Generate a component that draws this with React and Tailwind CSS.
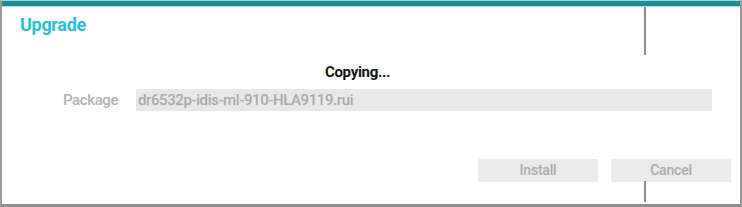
import React from "react";

export default function App() {
  return (
    <div className="relative w-[742px] h-[207px] bg-white overflow-hidden" style={{ fontFamily: "Roboto, 'Liberation Sans', sans-serif" }}>
      <div className="absolute inset-0 border-l-2 border-r-2 border-b-[3px] border-t border-l-[#9a9a9a] border-r-[#9a9a9a] border-b-[#8f8f8f] border-t-[#c8c8c8] flex flex-col">
        <div className="h-[6px] bg-[#14939f] border-b border-b-[#9fe3ea]"></div>
        <div className="flex-1 flex flex-col pl-[18px] pr-[9px]">
          <div className="pt-[7px] h-[56px] text-[18px] leading-[22px] font-bold text-[#26c0d3] tracking-[-0.3px]">Upgrade</div>
          <div className="text-center text-[15px] font-bold text-[#111] leading-[18px] h-[18px] pr-[36px] tracking-[-0.3px]">Copying...</div>
          <div className="flex items-center h-[22px] mt-[8px]">
            <div className="w-[116px] pl-[43px] text-[15px] font-medium text-[#b2b2b2] tracking-[-0.4px]">Package</div>
            <div className="w-[576px] h-[22px] bg-[#e8e8e8] text-[15px] font-medium text-[#a9a9a9] pl-[2px] leading-[22px] tracking-[-0.4px]">dr6532p-idis-ml-910-HLA9119.rui</div>
          </div>
          <div className="flex justify-end gap-[13px] mt-[48px]">
            <div className="w-[120px] h-[23px] bg-[#ebebeb] text-[14px] font-medium text-[#aaaaaa] flex items-center justify-center tracking-[-0.2px]">Install</div>
            <div className="w-[120px] h-[23px] bg-[#ebebeb] text-[14px] font-medium text-[#aaaaaa] flex items-center justify-center tracking-[-0.2px]">Cancel</div>
          </div>
        </div>
      </div>
      <div className="absolute left-[644px] top-[7px] w-[2px] h-[48px] bg-[#8a8a8a]"></div>
      <div className="absolute left-[644px] top-[181px] w-[2px] h-[21px] bg-[#8a8a8a]"></div>
    </div>
  );
}
